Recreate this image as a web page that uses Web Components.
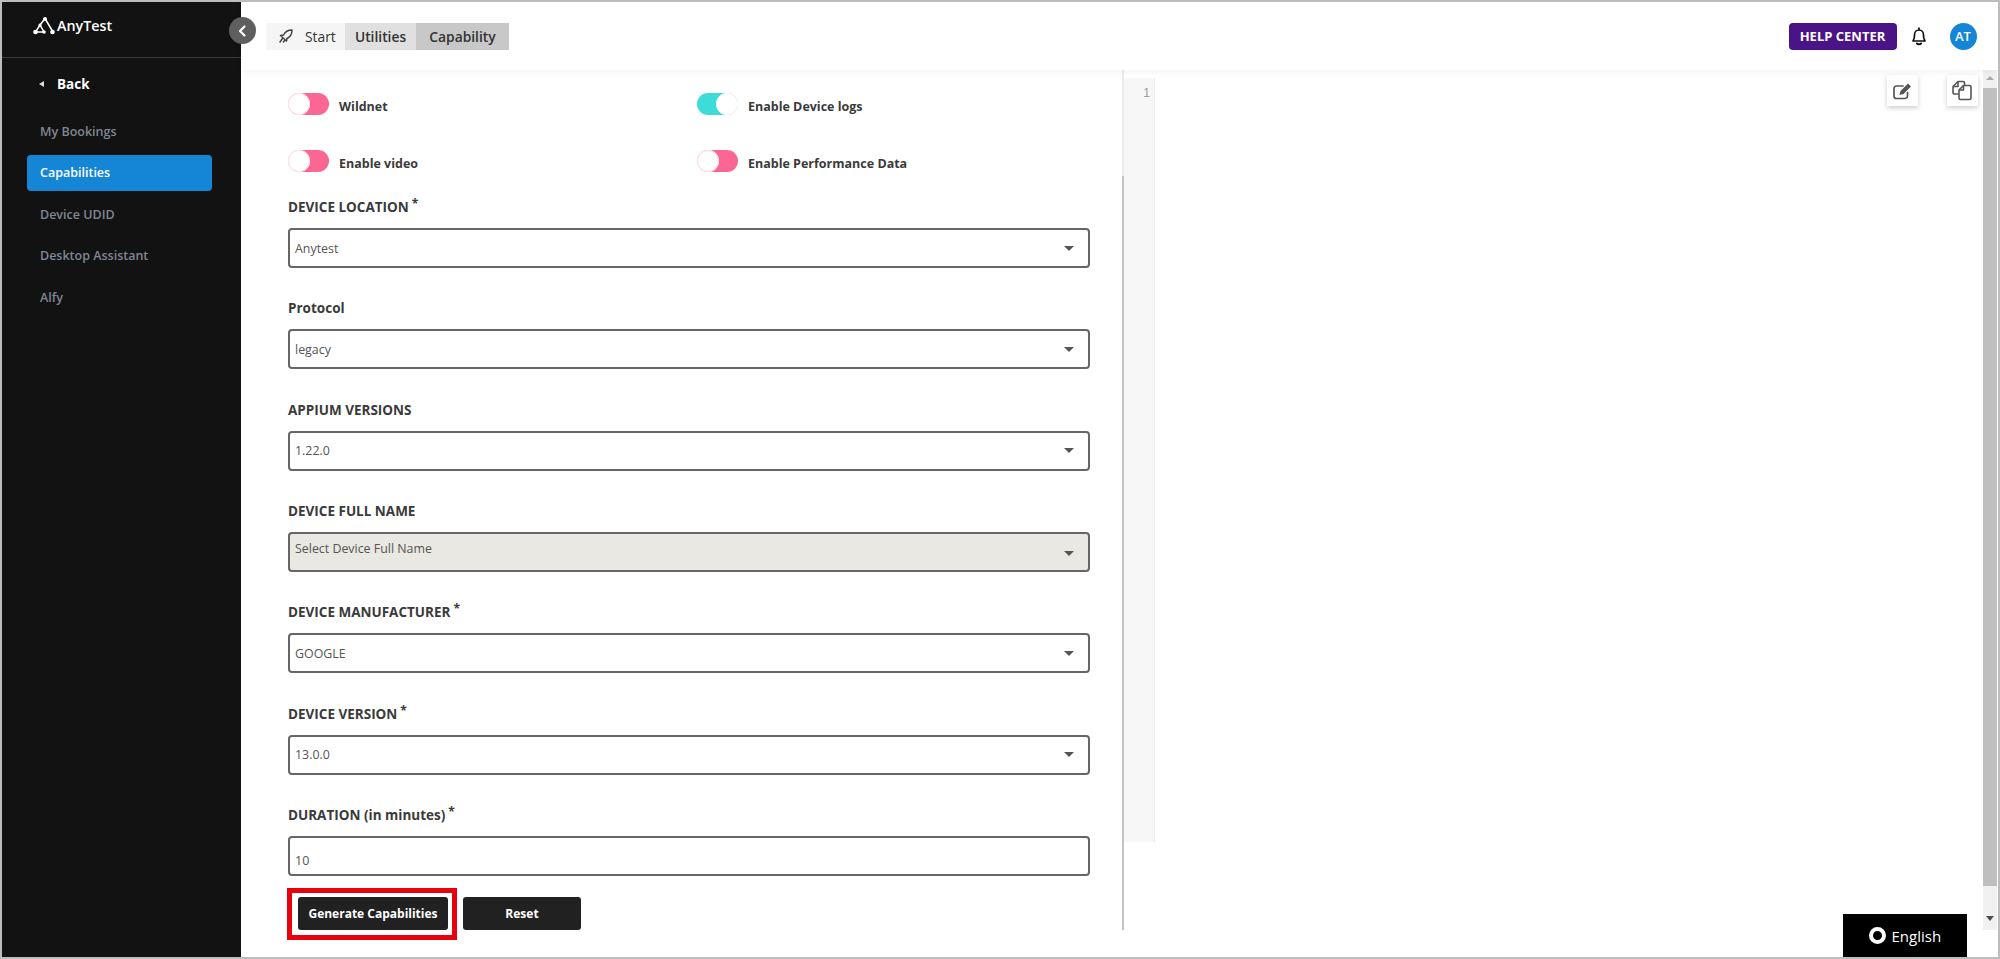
<!DOCTYPE html>
<html>
<head>
<meta charset="utf-8">
<title>AnyTest</title>
<style>
html, body { margin: 0; padding: 0; background: #fff; }
body { font-family: "Open Sans", "Noto Sans", sans-serif; }
</style>
</head>
<body>

<at-app>
    <at-sidebar slot="side">
        <at-nav-item>My Bookings</at-nav-item>
        <at-nav-item active>Capabilities</at-nav-item>
        <at-nav-item>Device UDID</at-nav-item>
        <at-nav-item>Desktop Assistant</at-nav-item>
        <at-nav-item>Alfy</at-nav-item>
    </at-sidebar>
    <at-topbar slot="top"></at-topbar>
    <at-form slot="form">
        <at-toggle>Wildnet</at-toggle>
        <at-toggle on>Enable Device logs</at-toggle>
        <at-toggle>Enable video</at-toggle>
        <at-toggle>Enable Performance Data</at-toggle>
        <at-field slot="fields" label="DEVICE LOCATION" required value="Anytest"></at-field>
        <at-field slot="fields" label="Protocol" value="legacy"></at-field>
        <at-field slot="fields" label="APPIUM VERSIONS" value="1.22.0"></at-field>
        <at-field slot="fields" label="DEVICE FULL NAME" value="Select Device Full Name" disabled></at-field>
        <at-field slot="fields" label="DEVICE MANUFACTURER" required value="GOOGLE"></at-field>
        <at-field slot="fields" label="DEVICE VERSION" required value="13.0.0"></at-field>
        <at-field slot="fields" label="DURATION (in minutes)" required value="10" input></at-field>
        <at-button slot="actions" highlight>Generate Capabilities</at-button>
        <at-button slot="actions">Reset</at-button>
    </at-form>
    <at-editor slot="editor"></at-editor>
    <at-lang slot="over">English</at-lang>
</at-app>

<script>
// small helper, every element below just stamps its html into an open shadow root
function shadow(el, html)
{
    el.attachShadow({mode: 'open'}).innerHTML = html;
}


class AtApp extends HTMLElement
{
    constructor()
    {
        super();
        shadow(this, `
            <style>
                :host { display: block; width: 2000px; height: 959px; box-sizing: border-box; border: 2px solid #bdbdbd; overflow: hidden; position: relative; }
                .shell { display: flex; height: 100%; }
                .main { flex: 1; display: flex; flex-direction: column; min-width: 0; }
                .body { flex: 1; display: flex; min-height: 0; }
                .over { position: absolute; right: 31.5px; bottom: 0; }
            </style>
            <div class="shell">
                <slot name="side"></slot>
                <div class="main">
                    <slot name="top"></slot>
                    <div class="body">
                        <slot name="form"></slot>
                        <slot name="editor"></slot>
                    </div>
                </div>
            </div>
            <div class="over"><slot name="over"></slot></div>
        `);
    }
}
customElements.define('at-app', AtApp);


class AtSidebar extends HTMLElement
{
    constructor()
    {
        super();
        shadow(this, `
            <style>
                :host { display: block; width: 239px; flex: none; background: #121212; position: relative; }
                .logo { height: 56px; box-sizing: border-box; padding: 14px 0 0 31px; border-bottom: 1px solid #3c3c3c; display: flex; gap: 2px; color: #fff; font-size: 14.3px; font-weight: 600; line-height: 20px; }
                .logo svg { display: block; margin-top: 1px; }
                .back { display: flex; align-items: center; height: 20px; margin-top: 16px; padding-left: 37px; color: #fff; font-size: 13.5px; font-weight: 700; }
                .back i { width: 0; height: 0; border: 3.5px solid transparent; border-right: 5px solid #ddd; border-left: 0; margin-right: 13px; }
                nav { display: flex; flex-direction: column; gap: 5.5px; padding: 19px 0 0 25px; }
                .toggle { position: absolute; top: 15px; left: 226.5px; width: 27px; height: 27px; border-radius: 50%; background: #5f5f5f; display: flex; align-items: center; justify-content: center; z-index: 3; }
            </style>
            <div class="logo">
                <svg width="22" height="18" viewBox="0 0 22 18" fill="#fff">
                    <path d="M12 1.5 L20 15 M12 1.5 L7 8 M7 8 L2.5 15 H11 Z" stroke="#fff" stroke-width="1.5" fill="none"/>
                    <circle cx="12" cy="2" r="2"/>
                    <circle cx="7" cy="8" r="1.6"/>
                    <circle cx="2.5" cy="15" r="2.3"/>
                    <circle cx="11" cy="15" r="1.8"/>
                    <circle cx="19.5" cy="15" r="2.3"/>
                </svg>
                <span>AnyTest</span>
            </div>
            <div class="back"><i></i>Back</div>
            <nav><slot></slot></nav>
            <div class="toggle">
                <svg width="12" height="14" viewBox="0 0 12 14"><path d="M8.5 2.5 L4 7 L8.5 11.5" fill="none" stroke="#fff" stroke-width="2.2" stroke-linecap="round" stroke-linejoin="round"/></svg>
            </div>
        `);
    }
}
customElements.define('at-sidebar', AtSidebar);


class AtNavItem extends HTMLElement
{
    constructor()
    {
        super();
        shadow(this, `
            <style>
                :host { display: flex; align-items: center; box-sizing: border-box; width: 185px; height: 36px; padding-left: 13px; border-radius: 4px; color: #7f8695; font-size: 12.5px; font-weight: 600; }
                :host([active]) { background: #1585d5; color: #fff; }
            </style>
            <slot></slot>
        `);
    }
}
customElements.define('at-nav-item', AtNavItem);


class AtTopbar extends HTMLElement
{
    constructor()
    {
        super();
        shadow(this, `
            <style>
                :host { display: flex; align-items: center; height: 68px; flex: none; box-sizing: border-box; padding: 0 21.5px 0 25px; background: #fff; box-shadow: 0 2px 8px rgba(0,0,0,.05); position: relative; z-index: 1; }
                .crumbs { display: flex; height: 27px; font-size: 13.8px; color: #333; line-height: 27px; }
                .crumbs span { display: flex; align-items: center; font-weight: 600; }
                .start { width: 79px; background: #f5f5f5; font-weight: 400 !important; padding-left: 13px; box-sizing: border-box; gap: 12px; }
                .util { width: 71px; background: #e0e0e0; justify-content: center; }
                .cap { width: 93px; background: #c8c8c8; justify-content: center; }
                .right { margin-left: auto; display: flex; align-items: center; }
                .help { width: 108px; height: 27px; line-height: 27px; text-align: center; border-radius: 4px; background: #4a1486; color: #fff; font-size: 13px; font-weight: 700; }
                .bell { display: block; margin: 0 22px 0 13px; }
                .avatar { width: 27px; height: 27px; line-height: 27px; border-radius: 50%; background: #1585d5; color: #fff; text-align: center; font-size: 13px; font-weight: 600; }
            </style>
            <div class="crumbs">
                <span class="start">
                    <svg width="14" height="14" viewBox="0 0 14 14" fill="none" stroke="#444" stroke-width="1.5" stroke-linecap="round" stroke-linejoin="round">
                        <path d="M13 1 C9 1 6 3 4.5 6 L1.5 6.5 L7.5 12 L8 9.5 C11 8 13 5 13 1 Z M3.5 9.5 L1 13 M6 11 L4.5 13"/>
                    </svg>
                    Start
                </span>
                <span class="util">Utilities</span>
                <span class="cap">Capability</span>
            </div>
            <div class="right">
                <div class="help">HELP CENTER</div>
                <svg class="bell" width="18" height="19" viewBox="0 0 18 19" fill="none" stroke="#111" stroke-width="1.7">
                    <path d="M3 14 L3.5 13 C4.5 11.5 4.5 10 4.5 8 C4.5 5 6.5 3 9 3 C11.5 3 13.5 5 13.5 8 C13.5 10 13.5 11.5 14.5 13 L15 14 Z" stroke-linejoin="round"/>
                    <path d="M7 16.5 C7.5 17.6 10.5 17.6 11 16.5" stroke-linecap="round" stroke-width="2"/>
                    <path d="M9 1 L9 2.5" stroke-linecap="round"/>
                </svg>
                <div class="avatar">AT</div>
            </div>
        `);
    }
}
customElements.define('at-topbar', AtTopbar);


class AtForm extends HTMLElement
{
    constructor()
    {
        super();
        shadow(this, `
            <style>
                :host { display: block; width: 883px; flex: none; box-sizing: border-box; padding: 23px 32px 0 47px; height: 860px; border-right: 2px solid; border-image: linear-gradient(#ececec 0 107px, #c4c4c4 107px 100%) 1; }
                .toggles { display: grid; grid-template-columns: 409px 1fr; row-gap: 35px; }
                .fields { margin-top: 25px; }
                .actions { display: flex; align-items: flex-start; gap: 6px; margin: -18.3px 0 0 -1px; }
            </style>
            <div class="toggles"><slot></slot></div>
            <div class="fields"><slot name="fields"></slot></div>
            <div class="actions"><slot name="actions"></slot></div>
        `);
    }
}
customElements.define('at-form', AtForm);


class AtToggle extends HTMLElement
{
    constructor()
    {
        super();
        shadow(this, `
            <style>
                :host { display: flex; align-items: flex-start; height: 22px; color: #3a3a3a; font-size: 12.5px; font-weight: 700; }
                .sw { width: 41px; height: 22px; border-radius: 11px; background: #fb6693; position: relative; flex: none; margin-right: 10px; }
                .sw::after { content: ""; position: absolute; top: 0; left: 0; width: 22px; height: 22px; border-radius: 50%; background: #fff; box-shadow: 0 0 0 1px #fde3ea inset; }
                :host([on]) .sw { background: #3edcd8; }
                :host([on]) .sw::after { left: auto; right: 0; box-shadow: none; }
                span { line-height: 21px; margin-top: 3px; }
            </style>
            <div class="sw"></div><span><slot></slot></span>
        `);
    }
}
customElements.define('at-toggle', AtToggle);


class AtField extends HTMLElement
{
    constructor()
    {
        super();
        let star = this.hasAttribute('required') ? '<sup>*</sup>' : '';
        let caret = this.hasAttribute('input') ? '' : '<i></i>';
        shadow(this, `
            <style>
                :host { display: block; height: 101.33px; color: #3a3a3a; }
                label { display: block; height: 20px; line-height: 20px; margin-bottom: 11px; font-size: 13.5px; font-weight: 700; white-space: nowrap; }
                sup { font-size: 12px; line-height: 0; margin-left: 3px; vertical-align: 4px; }
                .box { display: flex; align-items: center; justify-content: space-between; box-sizing: border-box; height: 40px; padding: 0 14px 0 5px; border: 2px solid #666; border-radius: 4px; font-size: 12.4px; color: #555; background: #fff; }
                :host([disabled]) .box { background: #e9e8e3; padding-bottom: 6px; }
                :host([input]) .box { padding-top: 9px; font-size: 12.5px; color: #555; }
                i { width: 0; height: 0; border: 5px solid transparent; border-top: 5px solid #555; border-bottom: 0; }
                :host([disabled]) i { margin-top: 9px; }
            </style>
            <label>${this.getAttribute('label')}${star}</label>
            <div class="box"><span>${this.getAttribute('value')}</span>${caret}</div>
        `);
    }
}
customElements.define('at-field', AtField);


class AtButton extends HTMLElement
{
    constructor()
    {
        super();
        shadow(this, `
            <style>
                :host { display: block; box-sizing: border-box; padding-top: 9px; }
                :host([highlight]) { border: 5px solid #e8000d; padding: 4px 4px 5px 6px; }
                div { display: flex; align-items: center; justify-content: center; width: 118px; height: 33px; border-radius: 3px; background: #212121; color: #fff; font-size: 12px; font-weight: 700; white-space: nowrap; }
                :host([highlight]) div { width: 150px; }
            </style>
            <div><slot></slot></div>
        `);
    }
}
customElements.define('at-button', AtButton);


class AtEditor extends HTMLElement
{
    constructor()
    {
        super();
        shadow(this, `
            <style>
                :host { flex: 1; display: flex; min-width: 0; position: relative; }
                .gutter { width: 31px; height: 764px; margin-top: 8px; flex: none; box-sizing: border-box; background: #f7f7f7; border-right: 1px solid #eeeeee; color: #9a9a9a; font: 12px "Liberation Sans", sans-serif; text-align: right; padding: 8px 4px 0 0; }
                .code { flex: 1; position: relative; }
                .tool { position: absolute; top: 5px; width: 31px; height: 31px; background: #fff; box-shadow: 0 2px 5px rgba(0,0,0,.2); display: flex; align-items: center; justify-content: center; }
                .scroll { width: 14px; height: 860px; flex: none; margin: 0 1px 0 0; background: #f1f1f1; display: flex; flex-direction: column; align-items: center; }
                .scroll b { width: 0; height: 0; border: 4px solid transparent; border-top: 0; border-bottom: 4px solid #aaa; margin-top: 6px; }
                .scroll u { display: block; width: 14px; height: 798px; margin-top: 8px; background: #bfbfbf; }
                .scroll s { width: 0; height: 0; border: 4px solid transparent; border-bottom: 0; border-top: 5px solid #505050; margin-top: 30px; }
            </style>
            <div class="gutter">1</div>
            <div class="code">
                <div class="tool" style="right:65px">
                    <svg width="21" height="20" viewBox="0 0 21 20" fill="none" stroke="#555" stroke-width="1.7" stroke-linecap="round">
                        <path d="M15.5 11.5 V15 A2.5 2.5 0 0 1 13 17.5 H4.5 A2.5 2.5 0 0 1 2 15 V7.5 A2.5 2.5 0 0 1 4.5 5 H11"/>
                        <path d="M7.5 14 L8.5 10 L16 2.5 L19 5.5 L11.5 13 Z" fill="#555" stroke="none"/>
                    </svg>
                </div>
                <div class="tool" style="right:5px">
                    <svg width="21" height="21" viewBox="0 0 21 21" fill="none" stroke="#555" stroke-width="1.6" stroke-linejoin="round">
                        <path d="M6.5 14 H2.5 A1.5 1.5 0 0 1 1 12.5 V6.5 L6 1.5 H11 A1.5 1.5 0 0 1 12.5 3 V5.5"/>
                        <path d="M6 1.5 V6.5 H1"/>
                        <path d="M8.5 19.5 A1.5 1.5 0 0 1 7 18 V10 L11.5 5.5 H17.5 A1.5 1.5 0 0 1 19 7 V18 A1.5 1.5 0 0 1 17.5 19.5 Z"/>
                        <path d="M11.5 5.5 V10 H7"/>
                    </svg>
                </div>
            </div>
            <div class="scroll"><b></b><u></u><s></s></div>
        `);
    }
}
customElements.define('at-editor', AtEditor);


class AtLang extends HTMLElement
{
    constructor()
    {
        super();
        shadow(this, `
            <style>
                :host { display: flex; align-items: center; box-sizing: border-box; width: 124px; height: 43px; padding-left: 26px; background: #000; color: #fff; font-size: 15px; }
                i { width: 9px; height: 9px; border: 4px solid #fff; border-radius: 50%; margin-right: 6px; }
            </style>
            <i></i><slot></slot>
        `);
    }
}
customElements.define('at-lang', AtLang);
</script>
</body>
</html>
